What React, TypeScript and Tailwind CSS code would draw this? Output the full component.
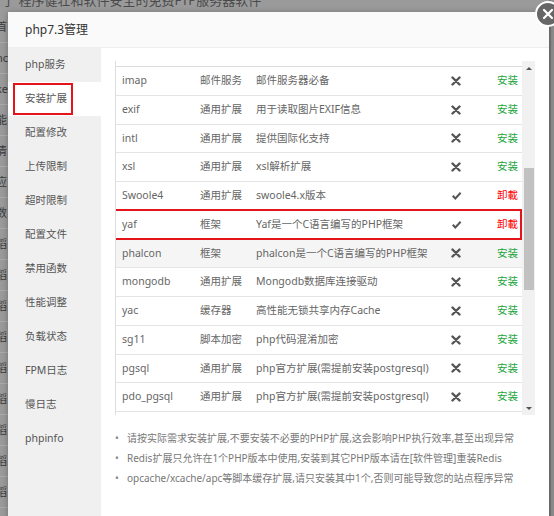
import React from 'react';

const font = { fontFamily: '"Noto Sans", "Noto Sans CJK SC", sans-serif' };

const menu = ['php服务', '安装扩展', '配置修改', '上传限制', '超时限制', '配置文件', '禁用函数', '性能调整', '负载状态', 'FPM日志', '慢日志', 'phpinfo'];

const rows = [
  { name: 'imap', type: '邮件服务', desc: '邮件服务器必备', on: false },
  { name: 'exif', type: '通用扩展', desc: '用于读取图片EXIF信息', on: false },
  { name: 'intl', type: '通用扩展', desc: '提供国际化支持', on: false },
  { name: 'xsl', type: '通用扩展', desc: 'xsl解析扩展', on: false },
  { name: 'Swoole4', type: '通用扩展', desc: 'swoole4.x版本', on: true },
  { name: 'yaf', type: '框架', desc: 'Yaf是一个C语言编写的PHP框架', on: true, mark: true },
  { name: 'phalcon', type: '框架', desc: 'phalcon是一个C语言编写的PHP框架', on: false, hover: true },
  { name: 'mongodb', type: '通用扩展', desc: 'Mongodb数据库连接驱动', on: false },
  { name: 'yac', type: '缓存器', desc: '高性能无锁共享内存Cache', on: false },
  { name: 'sg11', type: '脚本加密', desc: 'php代码混淆加密', on: false },
  { name: 'pgsql', type: '通用扩展', desc: 'php官方扩展(需提前安装postgresql)', on: false },
  { name: 'pdo_pgsql', type: '通用扩展', desc: 'php官方扩展(需提前安装postgresql)', on: false },
];

const notes = [
  '请按实际需求安装扩展,不要安装不必要的PHP扩展,这会影响PHP执行效率,甚至出现异常',
  'Redis扩展只允许在1个PHP版本中使用,安装到其它PHP版本请在[软件管理]重装Redis',
  'opcache/xcache/apc等脚本缓存扩展,请只安装其中1个,否则可能导致您的站点程序异常',
];

const bgSide = ['首', 'nc', 'ke', '能', '清', '应', '数', '稻', '稻', '稻', '稻', '稻', '稻', '稻', '稻', '稻'];

function StatusIcon({ on }: { on: boolean }) {
  if (on) {
    return (
      <svg width="11" height="10" viewBox="0 0 11 10">
        <path d="M1 5.6 L2.6 4.1 L4.3 5.9 L8.9 1 L10.4 2.5 L4.3 8.9 Z" fill="#555" />
      </svg>
    );
  }
  return (
    <svg width="10" height="10" viewBox="0 0 10 10">
      <path d="M1.5 1.5 L8.5 8.5 M8.5 1.5 L1.5 8.5" stroke="#555" strokeWidth="2.4" strokeLinecap="round" />
    </svg>
  );
}

export default function App() {
  return (
    <div className="relative w-[554px] h-[516px] overflow-hidden bg-[#9a9a9a]" style={font}>
      {/* page behind the overlay */}
      <div className="flex flex-col">
        <div className="h-[12px] overflow-hidden">
          <div className="-mt-[8px] pl-[2px] text-[13px] leading-[16px] text-[#4a4a4a] whitespace-nowrap">
            了 程序健壮和软件安全的免费FTP服务器软件
          </div>
        </div>
        <div className="flex flex-col w-[8px] overflow-hidden">
          {bgSide.map((t, i) => (
            <div key={i} className="h-[31px] flex items-center border-b border-[#aaaaaa] text-[11px] text-[#3a3a3a] whitespace-nowrap">
              <span className="-ml-[4px]">{t}</span>
            </div>
          ))}
        </div>
      </div>
      <div className="absolute right-0 top-0 w-[5px] h-full bg-[#8e8e8e] border-l-[2px] border-[#7a7a7a]" />

      {/* dialog */}
      <div className="absolute left-[8px] top-[12px] w-[541px] h-[520px] bg-white shadow-[0_1px_6px_rgba(0,0,0,0.3)] flex flex-col">
        <div className="h-[36px] shrink-0 flex items-center pl-[17px] bg-[#fafafa] border-b border-[#eeeeee] text-[12px] text-[#333]">
          php7.3管理
        </div>
        <div className="flex flex-1">
          <div className="w-[93px] shrink-0 bg-[#f0f0f0] flex flex-col">
            {menu.map((m, i) => (
              <div key={m} className={`h-[34px] flex items-center pl-[17px] text-[10.5px] text-[#555] ${i === 1 ? 'bg-white' : ''}`}>
                {i === 1 ? (
                  <span className="-ml-[12px] w-[60px] h-[32px] border-2 border-[#e5141b] flex items-center pl-[10px]">{m}</span>
                ) : (
                  m
                )}
              </div>
            ))}
          </div>

          <div className="flex-1 pl-[14px] pr-[14px] pt-[13px]">
            <div className="flex h-[354px]">
              <div className="flex-1 border-l border-[#dddddd] overflow-hidden flex flex-col">
                <div className="h-[6px] shrink-0 border-b border-[#dddddd]" />
                {rows.map((r) => (
                  <div
                    key={r.name}
                    className={`relative h-[28.75px] shrink-0 flex items-center border-b border-[#e4e4e4] text-[10.5px] text-[#666] ${r.hover ? 'bg-[#f5f5f5]' : ''}`}
                  >
                    <div className="w-[78px] pl-[6px]">{r.name}</div>
                    <div className="w-[56px] pl-[6px]">{r.type}</div>
                    <div className="w-[186px] pl-[6px] whitespace-nowrap">{r.desc}</div>
                    <div className="w-[40px] flex justify-center">
                      <StatusIcon on={r.on} />
                    </div>
                    <div className={`flex-1 text-right pr-[4px] ${r.on ? 'text-[#ff0000]' : 'text-[#20a53a]'}`}>
                      {r.on ? '卸載' : '安装'}
                    </div>
                    {r.mark && <div className="absolute -left-[8px] right-0 -top-[2px] -bottom-[1px] border-2 border-[#e5141b]" />}
                  </div>
                ))}
              </div>
              <div className="w-[13px] shrink-0 bg-[#f1f1f1] flex flex-col items-center">
                <div className="h-[14px] flex items-center justify-center">
                  <div className="w-0 h-0 border-l-[3px] border-r-[3px] border-b-[3px] border-l-transparent border-r-transparent border-b-[#555]" />
                </div>
                <div className="h-[93px]" />
                <div className="w-[10px] h-[122px] bg-[#c1c1c1]" />
                <div className="flex-1" />
                <div className="h-[14px] flex items-center justify-center">
                  <div className="w-0 h-0 border-l-[3px] border-r-[3px] border-t-[3px] border-l-transparent border-r-transparent border-t-[#555]" />
                </div>
              </div>
            </div>

            <ul className="mt-[13px] flex flex-col">
              {notes.map((n) => (
                <li key={n} className="h-[20px] flex items-center text-[10px] text-[#777] whitespace-nowrap">
                  <span className="w-[12px] text-[#888]">•</span>
                  <span>{n}</span>
                </li>
              ))}
            </ul>
          </div>
        </div>
      </div>

      {/* close button */}
      <div className="absolute left-[535px] top-[1px] w-[26px] h-[26px] rounded-full bg-[#666] border-2 border-white flex items-center justify-center">
        <svg width="12" height="12" viewBox="0 0 12 12">
          <path d="M2 2 L10 10 M10 2 L2 10" stroke="white" strokeWidth="2.2" strokeLinecap="round" />
        </svg>
      </div>
    </div>
  );
}
